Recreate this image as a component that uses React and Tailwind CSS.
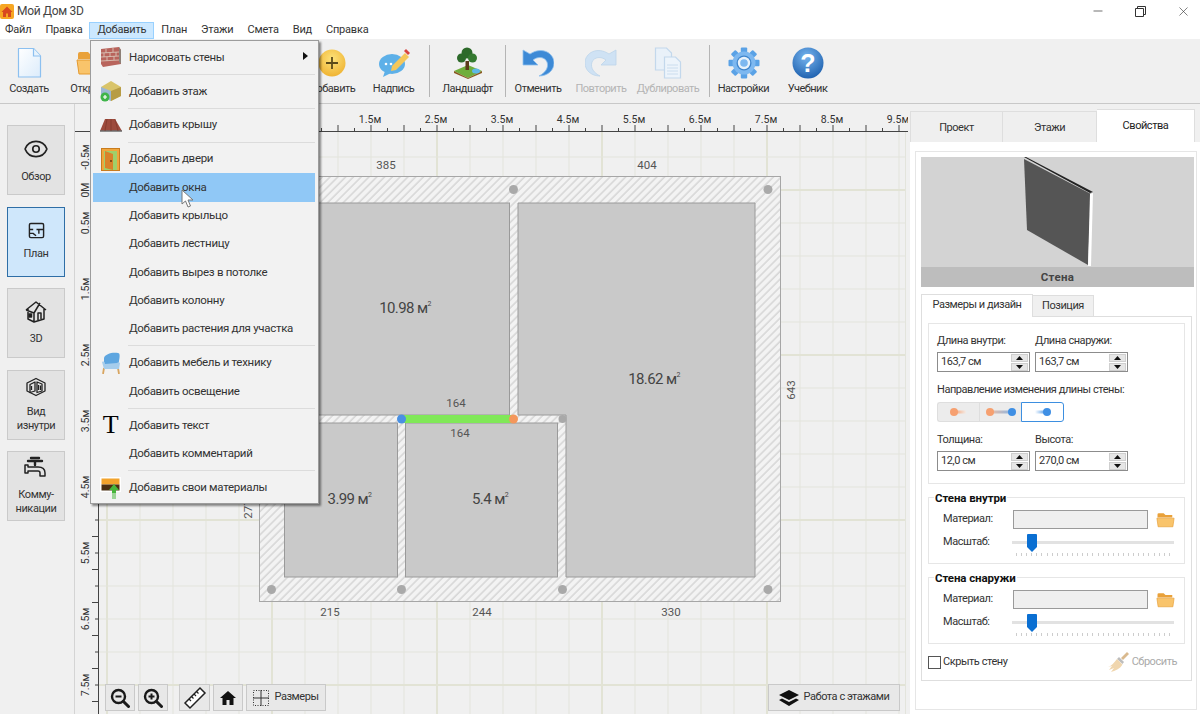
import { Minus, X, Eye } from 'lucide-react';

const range = (from, to, step) => {
  const out = [];
  for (let v = from; v <= to; v += step) out.push(v);
  return out;
};

const menuBar = ['Файл', 'Правка', 'Добавить', 'План', 'Этажи', 'Смета', 'Вид', 'Справка'];

const AppIcon = () => (
  <svg width="14" height="15" viewBox="0 0 14 15" className="shrink-0">
    <rect width="14" height="15" rx="2" fill="#f6a623" />
    <path d="M7 2.500 1.500 8H3v5h3V9.500h2V13h3V8h1.500z" fill="#d8481e" />
  </svg>
);

const DocIcon = () => (
  <svg width="30" height="32" viewBox="0 0 30 32">
    <defs>
      <linearGradient id="doc" x1="0" y1="0" x2="1" y2="1">
        <stop offset="0" stopColor="#ffffff" />
        <stop offset="1" stopColor="#dcecfb" />
      </linearGradient>
    </defs>
    <path d="M4.500 1.500h15l7 7.500v21h-22z" fill="url(#doc)" stroke="#8cc0f0" strokeWidth="1.200" strokeLinejoin="round" />
    <path d="M19.500 1.500v7.500h7" fill="#e8f3fc" stroke="#8cc0f0" strokeWidth="1.200" />
  </svg>
);

const FolderIcon = ({ w = 30, h = 26 }) => (
  <svg width={w} height={h} viewBox="0 0 30 26">
    <path d="M2 4a2 2 0 0 1 2-2h8l3 3h11v4H2z" fill="#e9a13a" />
    <path d="M1 10h28l-2 14H3z" fill="#f9c46b" stroke="#e59a2f" strokeWidth="1" />
  </svg>
);

const PlusIcon = () => (
  <svg width="28" height="28" viewBox="0 0 28 28">
    <defs>
      <radialGradient id="plus" cx="0.5" cy="0.35" r="0.7">
        <stop offset="0" stopColor="#fde27a" />
        <stop offset="1" stopColor="#eeb02e" />
      </radialGradient>
    </defs>
    <circle cx="14" cy="14" r="13.500" fill="url(#plus)" />
    <path d="M14 8v12M8 14h12" stroke="#5b4a1a" strokeWidth="1.800" />
  </svg>
);

const NoteIcon = () => (
  <svg width="32" height="32" viewBox="0 0 32 32">
    <ellipse cx="14" cy="17" rx="13" ry="10" fill="#5db0e8" />
    <path d="M7 24l-2 6 8-4z" fill="#5db0e8" />
    <path d="M14 19 27 6l4 4-13 13-5 1z" fill="#f5c75a" />
    <path d="M26 4l2-2 4 4-2 2z" fill="#d8433f" />
    <circle cx="8" cy="17" r="1.300" fill="#fff" />
    <circle cx="13" cy="17" r="1.300" fill="#fff" />
  </svg>
);

const LandscapeIcon = () => (
  <svg width="32" height="32" viewBox="0 0 32 32">
    <path d="M2 24 16 18l14 6-14 7z" fill="#6fae3c" />
    <path d="M2 24v2l14 6v-1zM30 24v2l-14 6v-1z" fill="#8a5a22" />
    <ellipse cx="24" cy="24" rx="4" ry="2.500" fill="#5db8e8" />
    <rect x="13.500" y="14" width="3.500" height="9" fill="#5b3a1a" />
    <circle cx="15" cy="6" r="5.500" fill="#2d6a2a" />
    <circle cx="9.500" cy="11" r="4.500" fill="#2d6a2a" />
    <circle cx="20.500" cy="11" r="4.500" fill="#357a30" />
  </svg>
);

const UndoIcon = ({ color = '#3d8ad6', light = '#8fc0ee', flip = false }) => (
  <svg width="32" height="30" viewBox="0 0 32 30" className={flip ? '-scale-x-100' : ''}>
    <path d="M1 2v15h15l-5-5c5-4 12-3 14 2 2 6-2 11-8 14 9 0 15-6 15-13C32 5 20-2 8 6z" fill={color} stroke={light} strokeWidth="0.800" />
  </svg>
);

const CopyIcon = () => (
  <svg width="28" height="32" viewBox="0 0 28 32" fill="#e9f1f9" stroke="#c3d8ec" strokeWidth="1.200">
    <path d="M1.500 1h11l5 5v17h-16z" />
    <path d="M10.500 10h11l5 5v16h-16z" fill="#edf4fb" />
    <path d="M13 18h11M13 21h11M13 24h11M13 27h11" strokeWidth="0.800" />
  </svg>
);

const GearIcon = () => (
  <svg width="32" height="32" viewBox="0 0 32 32">
    {range(0, 315, 45).map((a) => (
      <rect key={a} x="12.800" y="0.500" width="6.400" height="7" rx="1" fill="#5aa2e6" transform={`rotate(${a} 16 16)`} />
    ))}
    <circle cx="16" cy="16" r="11.500" fill="#7db8f0" />
    <circle cx="16" cy="16" r="7.500" fill="#3f85cc" />
    <circle cx="16" cy="16" r="6.200" fill="#e8f2fb" />
    <circle cx="16" cy="16" r="3.800" fill="#7db8f0" />
  </svg>
);

const HelpIcon = () => (
  <svg width="32" height="32" viewBox="0 0 32 32">
    <defs>
      <radialGradient id="help" cx="0.45" cy="0.3" r="0.8">
        <stop offset="0" stopColor="#76b4ee" />
        <stop offset="1" stopColor="#1558a8" />
      </radialGradient>
    </defs>
    <circle cx="16" cy="16" r="15.500" fill="url(#help)" />
    <text x="16" y="25" textAnchor="middle" fontSize="25" fontWeight="700" fontFamily="'Liberation Sans', sans-serif" fill="#fff">?</text>
  </svg>
);

const ToolButton = ({ label, w, muted, children }) => (
  <div className={`${w} flex flex-col items-center pt-[8px] shrink-0`}>
    <div className="h-[32px] flex items-center justify-center">{children}</div>
    <span className={`mt-[2px] text-[11px] tracking-[-0.5px] leading-4 whitespace-nowrap ${muted ? 'text-[#b4b4b4]' : 'text-[#333]'}`}>{label}</span>
  </div>
);

const ToolSep = () => <div className="w-[1px] h-[52px] mt-[6px] bg-[#b5b5b5] shrink-0" />;

const SideIcon = ({ name }) => {
  if (name === 'eye') return <Eye size={26} strokeWidth={1.500} className="text-[#222]" />;
  if (name === 'plan')
    return (
      <svg width="17" height="17" viewBox="0 0 18 18" fill="none" stroke="#222" strokeWidth="1.500">
        <rect x="1.500" y="1.500" width="15" height="15" rx="1.500" />
        <path d="M1.500 8h4M9 8h7.500M11.500 8v4.500M1.500 12h4l3 2.500" />
      </svg>
    );
  if (name === '3d')
    return (
      <svg width="22" height="24" viewBox="0 0 22 24" fill="none" stroke="#222" strokeWidth="1.500" strokeLinejoin="round">
        <path d="M1 10 11 2l10 8M3 9v10l6 3 10-3V9M9 22V13L1 10M9 13l6-10" />
        <rect x="4" y="14" width="2.500" height="3" fill="#222" />
        <path d="M13 20v-7h3v6" />
      </svg>
    );
  if (name === 'inside')
    return (
      <svg width="20" height="20" viewBox="0 0 20 20" fill="none" stroke="#222" strokeWidth="1.300" strokeLinejoin="round">
        <path d="M1 6l9-4.500L19 6v8l-9 4.500L1 14z" />
        <path d="M4 7.500l5-2.500v9l-5 1.500zM11 5l5 2v7l-5 1.500z" />
        <path d="M12.500 8v5M14.500 8.500v4.500M5.500 9v4" />
      </svg>
    );
  return (
    <svg width="24" height="24" viewBox="0 0 24 24" fill="none" stroke="#222" strokeWidth="1.500" strokeLinejoin="round">
      <path d="M7 2h8M4 5h14M11 5v4" strokeWidth="2.400" strokeLinecap="round" />
      <path d="M1 9h3v2h10c4 0 7 2 7 6v3h-5v-3c0-1-1-2-2-2H4v2H1z" />
    </svg>
  );
};

const SideButton = ({ icon, lines, active }) => (
  <div className={`w-[58px] h-[70px] flex flex-col items-center justify-center border ${active ? 'bg-[#cfe7fb] border-[#2e6ea6]' : 'bg-[#e3e3e3] border-[#cacaca]'}`}>
    <SideIcon name={icon} />
    <div className="mt-[8px] text-[11px] tracking-[-0.4px] leading-[14px] text-center text-[#333]">
      {lines.map((l) => (
        <div key={l}>{l}</div>
      ))}
    </div>
  </div>
);

const gridXs = range(107, 905, 33);
const gridYs = range(157, 712, 33);
const topLabels = ['1.5м', '2.5м', '3.5м', '4.5м', '5.5м', '6.5м', '7.5м', '8.5м', '9.5м'];
const leftLabels = [
  ['-0.5м', 157],
  ['0М', 190],
  ['0.5м', 223],
  ['1.5м', 289],
  ['2.5м', 355],
  ['3.5м', 421],
  ['4.5м', 487],
  ['5.5м', 553],
  ['6.5м', 619],
  ['7.5м', 685],
];
const dims = [
  ['385', 386, 169],
  ['404', 647, 169],
  ['164', 456, 407],
  ['164', 460, 437],
  ['215', 330, 616],
  ['244', 482, 616],
  ['330', 671, 616],
];
const areas = [
  ['10.98', 'м', 405, 313],
  ['18.62', 'м', 654, 384],
  ['3.99', 'м', 349.5, 504],
  ['5.4', 'м', 490, 504],
];
const dots = [
  [513.5, 189.5],
  [768, 189.5],
  [271.5, 589.5],
  [401.5, 589.5],
  [562.5, 589.5],
  [768, 589.5],
];

const PlanCanvas = () => (
  <svg viewBox="75 104 833 610" className="block w-full h-full" fontFamily="Roboto, sans-serif">
    <defs>
      <pattern id="hatch" width="5.500" height="5.500" patternUnits="userSpaceOnUse" patternTransform="rotate(45)">
        <rect width="5.500" height="5.500" fill="#f3f3f3" />
        <line x1="1" y1="0" x2="1" y2="5.500" stroke="#cbcbcb" strokeWidth="1.100" />
      </pattern>
    </defs>
    <rect x="75" y="104" width="833" height="610" fill="#f0f0f0" />

    {gridXs.map((x) => (
      <line key={x} x1={x} y1="132" x2={x} y2="714" stroke={(x - 107) % 165 === 0 ? '#e2e3d5' : '#e3e4dc'} strokeWidth={(x - 107) % 165 === 0 ? 2 : 1} />
    ))}
    {gridYs.map((y) => (
      <line key={y} x1="99" y1={y} x2="905" y2={y} stroke={(y - 190) % 165 === 0 ? '#e2e3d5' : '#e3e4dc'} strokeWidth={(y - 190) % 165 === 0 ? 2 : 1} />
    ))}

    <rect x="259.500" y="176.500" width="521" height="425" fill="url(#hatch)" stroke="#a6a6a6" />
    <g fill="#c9c9c9" stroke="#9a9a9a">
      <rect x="284.500" y="203" width="225" height="212" />
      <rect x="284.500" y="423" width="113" height="154" />
      <rect x="405.500" y="423" width="152" height="154" />
      <path d="M518 203H755V577H566V415H518z" />
    </g>
    <rect x="401" y="415" width="112" height="8" fill="#80e858" />
    <circle cx="401.500" cy="419" r="4.500" fill="#4a90e2" />
    <circle cx="513.500" cy="419" r="4.500" fill="#f4975c" />
    <circle cx="562.500" cy="419" r="4" fill="#a9a9a9" />
    {dots.map(([x, y]) => (
      <circle key={x + '-' + y} cx={x} cy={y} r="4.500" fill="#a9a9a9" />
    ))}

    {dims.map(([t, x, y]) => (
      <text key={t + x} x={x} y={y} textAnchor="middle" fontSize="11.500" fill="#555">{t}</text>
    ))}
    <text transform="translate(795 390) rotate(-90)" textAnchor="middle" fontSize="11.500" fill="#555">643</text>
    <text transform="translate(252 509) rotate(-90)" textAnchor="middle" fontSize="11.500" fill="#555">277</text>
    {areas.map(([v, u, x, y]) => (
      <text key={v} x={x} y={y} textAnchor="middle" fontSize="15" letterSpacing="-0.6" fill="#444">
        {v} {u}
        <tspan fontSize="7" dy="-7">2</tspan>
      </text>
    ))}

    {/* top ruler */}
    <rect x="75" y="104" width="833" height="27" fill="#f0f0f0" />
    <line x1="75" y1="131.500" x2="908" y2="131.500" stroke="#444" />
    {range(107, 905, 16.5).map((x, i) => (
      <line key={x} x1={x} y1={i % 2 ? 128 : 125} x2={x} y2="131" stroke="#444" />
    ))}
    {topLabels.map((t, i) => (
      <text key={t} x={370 + i * 66} y="123" textAnchor="middle" fontSize="10.500" fill="#333">{t}</text>
    ))}

    {/* left ruler */}
    <rect x="75" y="132" width="23" height="582" fill="#f0f0f0" />
    <line x1="98.500" y1="132" x2="98.500" y2="714" stroke="#444" />
    {range(140.5, 712, 16.5).map((y, i) => (
      <line key={y} x1={i % 2 ? 95 : 92} y1={y} x2="98" y2={y} stroke="#444" />
    ))}
    {leftLabels.map(([t, y]) => (
      <text key={t} transform={`translate(89 ${y}) rotate(-90)`} textAnchor="middle" fontSize="10.500" fill="#333">{t}</text>
    ))}
    <line x1="905.500" y1="132" x2="905.500" y2="714" stroke="#e3e4dc" />
  </svg>
);

const CanvasButton = ({ w, children }) => (
  <div className={`${w} h-[27px] flex items-center justify-center gap-[5px] bg-[#e8e8e8] border border-[#c9c9c9] text-[11px] tracking-[-0.45px] text-[#333]`}>{children}</div>
);

const ZoomIcon = ({ plus }) => (
  <svg width="20" height="20" viewBox="0 0 20 20" fill="none" stroke="#1a1a1a">
    <circle cx="8.500" cy="8.500" r="6.500" strokeWidth="2.400" />
    <path d="M13.500 13.500 18.500 18.500" strokeWidth="3" strokeLinecap="round" />
    <path d={plus ? 'M5.500 8.500h6M8.500 5.500v6' : 'M5.500 8.500h6'} strokeWidth="2" />
  </svg>
);

const RulerIcon = () => (
  <svg width="24" height="24" viewBox="0 0 24 24" fill="none" stroke="#222" strokeWidth="1.500">
    <path d="M2 17 17 2l5 5L7 22z" fill="#fff" />
    <path d="M6 13l2 2M8.500 10.500l2 2M11 8l2 2M13.500 5.500l2 2" strokeWidth="1.200" />
  </svg>
);

const HomeIcon = () => (
  <svg width="16" height="14" viewBox="0 0 16 14" fill="#111">
    <path d="M8 0 0 7h2.500v7h4V9h3v5h4V7H16z" />
  </svg>
);

const SizesIcon = () => (
  <svg width="16" height="16" viewBox="0 0 16 16" fill="none" stroke="#333">
    <path d="M8 0v16M0 8h16" />
    <path d="M0.500 0.500h15v15h-15z" strokeDasharray="1 1.500" />
  </svg>
);

const LayersIcon = () => (
  <svg width="20" height="16" viewBox="0 0 20 16" fill="#111">
    <path d="M10 0 20 5 10 10 0 5z" />
    <path d="M3 8.500 10 12l7-3.500L20 10l-10 6-10-6z" />
  </svg>
);

const BrickIcon = () => (
  <svg width="22" height="22" viewBox="0 0 22 22">
    <path d="M1 3 19 1l2 3v14l-18 3-2-3z" fill="#b8645c" />
    <path d="M19 1l2 3v14l-2-2z" fill="#8d8078" />
    <path d="M1 7l18-1M1 11l18-1M1 15l18-1M6 3v4M13 2v4M4 7v4M10 7v4M16 6v4M7 11v4M14 10v4" stroke="#d9c3b6" strokeWidth="0.900" />
  </svg>
);

const FloorIcon = () => (
  <svg width="22" height="24" viewBox="0 0 22 24">
    <path d="M1 8 11 2l10 6v9l-10 5-10-5z" fill="#d9c46a" />
    <path d="M1 8l10 4v10l-10-5z" fill="#9bb7d4" />
    <path d="M11 12l10-4v9l-10 5z" fill="#b79c45" />
    <circle cx="5" cy="18" r="4.500" fill="#3fb54a" />
    <path d="M3 18h4M5 16v4" stroke="#fff" strokeWidth="1.200" />
  </svg>
);

const RoofIcon = () => (
  <svg width="22" height="14" viewBox="0 0 22 14">
    <path d="M5 1h10l7 12H0z" fill="#9d4a3c" />
    <path d="M0 13h22" stroke="#6b6b6b" strokeWidth="1.500" />
    <path d="M7 1 5 13M11 1v12M15 1l3 12" stroke="#7c3528" strokeWidth="0.700" />
  </svg>
);

const DoorIcon = () => (
  <svg width="19" height="23" viewBox="0 0 19 23">
    <rect x="0.500" y="0.500" width="18" height="22" fill="#f0a63c" stroke="#c97c1e" />
    <rect x="3" y="3" width="13" height="19" fill="#9fcf6a" />
    <path d="M4 3l8 3v16l-8-2z" fill="#d9822b" />
    <circle cx="10" cy="13" r="0.900" fill="#603010" />
  </svg>
);

const ChairIcon = () => (
  <svg width="20" height="22" viewBox="0 0 20 22">
    <path d="M3 16 2 22M17 16l1 6" stroke="#d8a560" strokeWidth="1.800" />
    <path d="M3 6C4 2 11 0 17 1c2 0 2 3 1 8l-1 6H3z" fill="#5ea6e0" />
    <path d="M1 10c2-1 3 0 3 2l12-1c1-1 2-1 3 0l-1 6H3z" fill="#a6cdec" />
  </svg>
);

const MaterialIcon = () => (
  <svg width="22" height="23" viewBox="0 0 22 23">
    <rect x="0" y="1" width="21" height="15" fill="#fff" />
    <rect x="1.500" y="2.500" width="18" height="6" fill="#f2a32c" />
    <rect x="1.500" y="8.500" width="18" height="6" fill="#4a2f12" />
    <path d="M14 8l5 6h-3v3h-4v-3H9z" fill="#47b53b" />
    <path d="M12 18h4M12 20h4M12 22h4" stroke="#47b53b" strokeWidth="1.200" />
  </svg>
);

const menuItems = [
  { label: 'Нарисовать стены', icon: <BrickIcon />, arrow: true },
  { sep: true },
  { label: 'Добавить этаж', icon: <FloorIcon /> },
  { sep: true },
  { label: 'Добавить крышу', icon: <RoofIcon /> },
  { sep: true },
  { label: 'Добавить двери', icon: <DoorIcon /> },
  { label: 'Добавить окна', active: true },
  { label: 'Добавить крыльцо' },
  { label: 'Добавить лестницу' },
  { label: 'Добавить вырез в потолке' },
  { label: 'Добавить колонну' },
  { label: 'Добавить растения для участка' },
  { sep: true },
  { label: 'Добавить мебель и технику', icon: <ChairIcon /> },
  { label: 'Добавить освещение' },
  { sep: true },
  { label: 'Добавить текст', icon: <span className="text-[26px] leading-none text-black font-['Liberation_Serif',serif]">T</span> },
  { label: 'Добавить комментарий' },
  { sep: true },
  { label: 'Добавить свои материалы', icon: <MaterialIcon /> },
];

const AddMenu = () => (
  <div className="absolute left-[90px] top-[40px] w-[229px] h-[464px] pt-[2px] pl-[2px] pr-[3px] bg-[#f2f2f2] border border-[#9c9c9c] shadow-[2px_2px_2px_rgba(0,0,0,0.45)] z-20 text-[11.500px] tracking-[-0.3px] text-[#333]">
    {menuItems.map((item, i) =>
      item.sep ? (
        <div key={i} className="h-[5.700px] flex items-center pl-[35px]">
          <div className="w-full h-[1px] bg-[#dcdcdc]" />
        </div>
      ) : (
        <div key={i} className={`relative h-[28.300px] flex items-center ${item.active ? 'bg-[#90c8f6]' : ''}`}>
          <div className="w-[35px] flex justify-center shrink-0">{item.icon}</div>
          <span className="ml-[1px] whitespace-nowrap">{item.label}</span>
          {item.arrow && (
            <svg width="5" height="8" viewBox="0 0 5 8" className="absolute right-[7px] top-[9px]">
              <path d="M0 0l5 4-5 4z" fill="#111" />
            </svg>
          )}
        </div>
      ),
    )}
  </div>
);

const Cursor = () => (
  <svg width="13" height="20" viewBox="0 0 13 20" className="absolute left-[181px] top-[189px] z-30">
    <path d="M1 1v14l3.500-3 2.500 6 2.500-1-2.500-6H12z" fill="#fff" stroke="#777" strokeWidth="1" />
  </svg>
);

const Triangle = ({ down }) => (
  <svg width="7" height="4" viewBox="0 0 7 4">
    <path d={down ? 'M0 0h7L3.500 4z' : 'M0 4h7L3.500 0z'} fill="#111" />
  </svg>
);

const SpinInput = ({ value }) => (
  <div className="w-[93px] h-[20px] flex items-center justify-between pl-[3px] pr-[1px] border border-[#8c8c8c] bg-white text-[#333]">
    <span>{value}</span>
    <div className="flex flex-col gap-[1px]">
      <div className="w-[17px] h-[8px] flex items-center justify-center bg-[#e6e6e6] border border-[#cfcfcf]"><Triangle /></div>
      <div className="w-[17px] h-[8px] flex items-center justify-center bg-[#e6e6e6] border border-[#cfcfcf]"><Triangle down /></div>
    </div>
  </div>
);

const SpinField = ({ label, value }) => (
  <div className="w-[93px]">
    <div className="h-[16px] leading-4 whitespace-nowrap">{label}</div>
    <div className="mt-[3px]"><SpinInput value={value} /></div>
  </div>
);

const Direction = ({ id, from, to }) => (
  <svg width="34" height="10" viewBox="0 0 34 10">
    <defs>
      <linearGradient id={id}>
        <stop offset="0" stopColor={from ? '#f6a070' : '#ffffff'} />
        <stop offset="1" stopColor={to ? '#3f8fe4' : '#f3ebe6'} />
      </linearGradient>
    </defs>
    {id === 'both' && <rect x="5" y="3.500" width="24" height="3" fill="url(#both)" opacity="0.600" />}
    {id === 'left' && <rect x="12" y="3.500" width="12" height="3" fill="url(#left)" />}
    {id === 'right' && <rect x="9" y="3.500" width="12" height="3" fill="url(#right)" />}
    {id === 'left' && <circle cx="12" cy="5" r="4" fill="#f6a070" />}
    {id === 'right' && <circle cx="21" cy="5" r="4" fill="#3f8fe4" />}
    {id === 'both' && <circle cx="6" cy="5" r="4" fill="#f6a070" />}
    {id === 'both' && <circle cx="28" cy="5" r="4" fill="#3f8fe4" />}
  </svg>
);

const ticks = range(0, 30, 1);

const MaterialBox = ({ title }) => (
  <div className="h-[67px] border border-[#e6e6e6]">
    <div className="-mt-[8px] ml-[5px] w-fit h-[16px] px-[1px] bg-white text-[11.500px] tracking-[-0.1px] leading-4 font-bold text-[#111]">{title}</div>
    <div className="mt-[4px] flex items-center pl-[14px]">
      <span className="w-[70px]">Материал:</span>
      <div className="w-[135px] h-[19px] bg-[#efefef] border border-[#9a9a9a]" />
      <div className="ml-[8px]"><FolderIcon w={19} h={16} /></div>
    </div>
    <div className="mt-[5px] flex items-start pl-[14px]">
      <span className="w-[69px] h-[16px] leading-4">Масштаб:</span>
      <div className="relative w-[162px] h-[24px]">
        <div className="absolute left-0 right-0 top-[7px] h-[3px] bg-[#e2e2e2]" />
        <svg width="10" height="18" viewBox="0 0 10 18" className="absolute left-[15px] top-0">
          <path d="M1 0h8a1 1 0 0 1 1 1v12l-5 5-5-5V1a1 1 0 0 1 1-1z" fill="#0a6fd2" />
        </svg>
        <div className="absolute left-[4px] right-[4px] top-[19px] flex justify-between">
          {ticks.map((t) => (
            <div key={t} className="w-[1px] h-[3px] bg-[#cdcdcd]" />
          ))}
        </div>
      </div>
    </div>
  </div>
);

const BrushIcon = () => (
  <svg width="21" height="20" viewBox="0 0 21 20">
    <path d="M13 6 19 0l2 2-6 6z" fill="#d9b98e" />
    <path d="M11 5l5 5-1.500 2L9 7z" fill="#bdbdbd" />
    <path d="M9 7l5.500 5.500C12 17 7 19 3 20l3-4-5 2 3-4-4 1C3 14 6 11 9 7z" fill="#f0d6ae" />
  </svg>
);

const PropertiesPanel = () => (
  <aside className="w-[292px] shrink-0 flex flex-col pt-[5px] pl-[2px] bg-[#f0f0f0] text-[11px] tracking-[-0.45px] text-[#333]">
    <div className="flex items-end h-[33px]">
      <div className="w-[93px] h-[31px] pt-[3px] flex items-center justify-center bg-[#efefef] border border-b-0 border-[#dedede]">Проект</div>
      <div className="w-[94px] h-[31px] pt-[3px] flex items-center justify-center bg-[#efefef] border-t border-r border-[#dedede]">Этажи</div>
      <div className="w-[98px] h-[33px] flex items-center justify-center bg-white border-t border-r border-[#dedede] text-[#222]">Свойства</div>
    </div>
    <div className="flex-1 bg-white pl-[5px] pr-[3px] pt-[9px] pb-[3px]">
      <div className="h-[559px] px-[5px] pt-[5px] border border-[#e6e6e6]">
        <div className="w-[273px]">
          <svg width="273" height="110" viewBox="0 0 273 110" className="block bg-[#d3d3d3]">
            <path d="M103 2 170 37 167 108 106 73z" fill="#555" />
            <path d="M103 0l66 36 3-1-67-35z" fill="#222" />
            <path d="M169 37l3-1-2 73h-3z" fill="#fff" />
          </svg>
          <div className="h-[20px] pt-[1px] flex items-center justify-center bg-[#bdbdbd] text-[11.500px] font-bold tracking-[0.3px] text-[#444]">Стена</div>
        </div>
        <div className="mt-[6px] flex items-end h-[23px]">
          <div className="w-[112px] h-[23px] pb-[1px] flex items-center justify-center bg-white border-t border-x border-[#dedede] -mb-[1px] z-10">Размеры и дизайн</div>
          <div className="w-[61px] h-[21px] flex items-center justify-center bg-[#f0f0f0] border-t border-r border-[#dedede]">Позиция</div>
        </div>
        <div className="w-[271px] h-[365px] p-[6px] border border-[#dedede]">
          <div className="h-[161px] pl-[8px] pt-[9px] border border-[#e6e6e6]">
            <div className="flex gap-[5px]">
              <SpinField label="Длина внутри:" value="163,7 см" />
              <SpinField label="Длина снаружи:" value="163,7 см" />
            </div>
            <div className="mt-[10px] h-[16px] leading-4 whitespace-nowrap">Направление изменения длины стены:</div>
            <div className="mt-[4px] flex w-[127px] h-[20px]">
              <div className="flex-1 flex items-center justify-center bg-[#ececec] border border-r-0 border-[#dedede] rounded-l-[3px]"><Direction id="left" from /></div>
              <div className="flex-1 flex items-center justify-center bg-[#ececec] border border-r-0 border-[#dedede]"><Direction id="both" from to /></div>
              <div className="flex-1 flex items-center justify-center bg-white border border-[#3d8fe0] rounded-r-[3px]"><Direction id="right" to /></div>
            </div>
            <div className="mt-[10px] flex gap-[5px]">
              <SpinField label="Толщина:" value="12,0 см" />
              <SpinField label="Высота:" value="270,0 см" />
            </div>
          </div>
          <div className="mt-[13px]"><MaterialBox title="Стена внутри" /></div>
          <div className="mt-[13px]"><MaterialBox title="Стена снаружи" /></div>
          <div className="mt-[10px] h-[16px] flex items-center justify-between pr-[8px]">
            <div className="flex items-center gap-[2px]">
              <div className="w-[13px] h-[13px] bg-white border border-[#555]" />
              <span>Скрыть стену</span>
            </div>
            <div className="flex items-center gap-[3px] text-[#aaa]">
              <BrushIcon />
              <span>Сбросить</span>
            </div>
          </div>
        </div>
      </div>
    </div>
  </aside>
);

export default function App() {
  return (
    <div className="relative w-[1200px] h-[714px] flex flex-col overflow-hidden bg-white font-['Roboto',sans-serif] text-[#333]">
      <div className="h-[22px] flex items-center justify-between shrink-0">
        <div className="flex items-center gap-[3px]">
          <AppIcon />
          <span className="text-[12px] tracking-[-0.3px] text-[#444]">Мой Дом 3D</span>
        </div>
        <div className="flex items-center text-[#333]">
          <div className="w-[43px] flex justify-center"><Minus size={14} strokeWidth={1.200} /></div>
          <div className="w-[43px] mr-[4px] flex justify-center">
            <svg width="11" height="11" viewBox="0 0 11 11" fill="none" stroke="#333">
              <path d="M0.500 2.500h8v8h-8zM2.500 2.500v-2h8v8h-2" />
            </svg>
          </div>
          <div className="w-[34px] flex justify-center"><X size={15} strokeWidth={1} /></div>
        </div>
      </div>

      <div className="h-[17px] -ml-[2px] flex items-center shrink-0 text-[11px] tracking-[-0.2px]">
        {menuBar.map((m) => (
          <div key={m} className={`px-[7px] h-[17px] flex items-center whitespace-nowrap ${m === 'Добавить' ? 'bg-[#cce8ff] border border-[#99d1ff]' : ''}`}>{m}</div>
        ))}
      </div>

      <div className="h-[65px] shrink-0 flex bg-[#f0f0f0] border-b border-[#c8c8c8]">
        <ToolButton label="Создать" w="w-[58px]"><DocIcon /></ToolButton>
        <ToolButton label="Открыть" w="w-[66px]"><FolderIcon /></ToolButton>
        <div className="w-[182px] shrink-0" />
        <ToolButton label="Добавить" w="w-[52px]"><PlusIcon /></ToolButton>
        <ToolButton label="Надпись" w="w-[71px]"><NoteIcon /></ToolButton>
        <ToolSep />
        <ToolButton label="Ландшафт" w="w-[75px]"><LandscapeIcon /></ToolButton>
        <ToolSep />
        <ToolButton label="Отменить" w="w-[64px]"><UndoIcon /></ToolButton>
        <ToolButton label="Повторить" w="w-[62px]" muted><UndoIcon color="#cfe2f4" light="#bcd4ea" flip /></ToolButton>
        <ToolButton label="Дублировать" w="w-[72px]" muted><CopyIcon /></ToolButton>
        <div className="w-[5px] shrink-0" />
        <ToolSep />
        <ToolButton label="Настройки" w="w-[67px]"><GearIcon /></ToolButton>
        <ToolButton label="Учебник" w="w-[61px]"><HelpIcon /></ToolButton>
      </div>

      <div className="flex-1 flex min-h-0">
        <nav className="w-[75px] shrink-0 flex flex-col gap-[11.500px] pt-[21px] pl-[7px] bg-[#f0f0f0] border-r border-[#d4d4d4]">
          <SideButton icon="eye" lines={['Обзор']} />
          <SideButton icon="plan" lines={['План']} active />
          <SideButton icon="3d" lines={['3D']} />
          <SideButton icon="inside" lines={['Вид', 'изнутри']} />
          <SideButton icon="pipes" lines={['Комму-', 'никации']} />
        </nav>
        <main className="relative flex-1 min-w-0">
          <PlanCanvas />
          <div className="absolute left-[30px] bottom-[3px] flex">
            <CanvasButton w="w-[30px]"><ZoomIcon /></CanvasButton>
            <div className="ml-[3px]"><CanvasButton w="w-[30px]"><ZoomIcon plus /></CanvasButton></div>
            <div className="ml-[11px]"><CanvasButton w="w-[31px]"><RulerIcon /></CanvasButton></div>
            <div className="ml-[3px]"><CanvasButton w="w-[30px]"><HomeIcon /></CanvasButton></div>
            <div className="ml-[3px]"><CanvasButton w="w-[80px]"><SizesIcon /><span>Размеры</span></CanvasButton></div>
          </div>
          <div className="absolute left-[693px] bottom-[3px]">
            <CanvasButton w="w-[132px]"><LayersIcon /><span>Работа с этажами</span></CanvasButton>
          </div>
        </main>
        <PropertiesPanel />
      </div>

      <AddMenu />
      <Cursor />
    </div>
  );
}
